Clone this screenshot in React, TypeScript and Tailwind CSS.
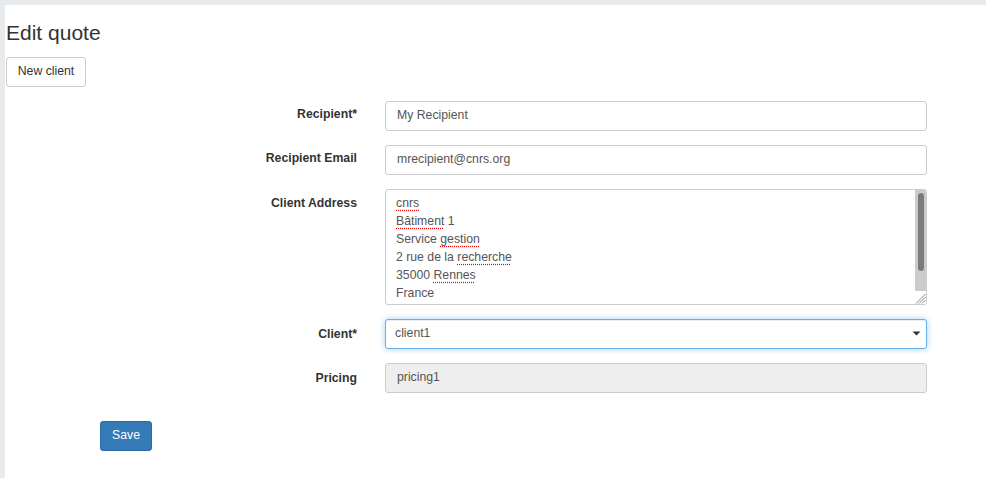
import React from "react";

const font = { fontFamily: '"Liberation Sans", Arial, sans-serif' };

function Label({ children, pt }: { children: React.ReactNode; pt: string }) {
  return (
    <div className={`w-[351px] shrink-0 text-right font-bold text-[#333] text-[12.25px] leading-[17px] ${pt}`}>
      {children}
    </div>
  );
}

function Sp({ children }: { children: React.ReactNode }) {
  return <span className="underline decoration-dotted decoration-[#e00] underline-offset-[3px]">{children}</span>;
}

export default function App() {
  return (
    <div style={font} className="min-h-screen bg-[#e7ebee] pt-[5px] pl-[5px]">
      <div className="min-h-[473px] bg-white pl-[1px]">
        <h3 className="pt-[16px] text-[21px] leading-[24px] text-[#333] font-normal">Edit quote</h3>
        <button className="mt-[12px] h-[30px] w-[80px] rounded-[3px] border border-[#ccc] bg-white pb-[1px] text-[12.25px] text-[#333]">
          New client
        </button>

        <div className="mt-[14px] flex flex-col gap-[14px]">
          <div className="flex">
            <Label pt="pt-[5px]">Recipient*</Label>
            <div className="ml-[28px] flex h-[30px] w-[542px] items-center rounded-[3px] border border-[#ccc] px-[11px] pb-[1px] text-[12.25px] text-[#555]">
              My Recipient
            </div>
          </div>
          <div className="flex">
            <Label pt="pt-[5px]">Recipient Email</Label>
            <div className="ml-[28px] flex h-[30px] w-[542px] items-center rounded-[3px] border border-[#ccc] px-[11px] pb-[1px] text-[12.25px] text-[#555]">
              mrecipient@cnrs.org
            </div>
          </div>
          <div className="flex">
            <Label pt="pt-[6px]">Client Address</Label>
            <div className="relative ml-[28px] h-[116px] w-[542px] overflow-hidden rounded-[3px] border border-[#ccc] text-[12.25px] leading-[18px] text-[#555]">
              <div className="pl-[10px] pt-[4px]">
                <div><Sp>cnrs</Sp></div>
                <div><Sp>Bâtiment</Sp> 1</div>
                <div>Service <Sp>gestion</Sp></div>
                <div>2 rue de la <Sp>recherche</Sp></div>
                <div>35000 <Sp>Rennes</Sp></div>
                <div>France</div>
              </div>
              <div className="absolute right-0 top-0 h-[101px] w-[11px] bg-[#cbcbcb]">
                <div className="mx-auto mt-[3px] h-[78px] w-[6px] rounded-full bg-[#7b7b7b]" />
              </div>
              <div className="absolute bottom-0 right-0 h-[13px] w-[11px] bg-white">
                <svg width="11" height="13" viewBox="0 0 11 13">
                  <g stroke="#888" strokeWidth="1">
                    <line x1="10.5" y1="3" x2="1" y2="12.5" />
                    <line x1="10.5" y1="6" x2="4" y2="12.5" />
                    <line x1="10.5" y1="9" x2="7" y2="12.5" />
                  </g>
                </svg>
              </div>
            </div>
          </div>
          <div className="flex">
            <Label pt="pt-[7px]">Client*</Label>
            <div className="relative ml-[28px] flex h-[30px] w-[542px] items-center rounded-[3px] border border-[#66afe9] px-[9px] pb-[1px] text-[12.25px] text-[#555] shadow-[inset_0_1px_1px_rgba(0,0,0,0.075),0_0_6px_rgba(102,175,233,0.6)]">
              client1
              <svg className="absolute right-[5px] top-[11px]" width="9" height="5" viewBox="0 0 9 5">
                <path d="M0.5 0.5 H8.5 L4.5 4.5 Z" fill="#333" />
              </svg>
            </div>
          </div>
          <div className="flex">
            <Label pt="pt-[7px]">Pricing</Label>
            <div className="ml-[28px] flex h-[30px] w-[542px] items-center rounded-[3px] border border-[#ccc] bg-[#eee] px-[11px] pb-[1px] text-[12.25px] text-[#555]">
              pricing1
            </div>
          </div>
        </div>

        <button className="ml-[94px] mt-[28px] h-[30px] w-[52px] rounded-[3px] border border-[#2e6da4] bg-[#337ab7] pb-[1px] text-[12.25px] text-white">
          Save
        </button>
      </div>
    </div>
  );
}
